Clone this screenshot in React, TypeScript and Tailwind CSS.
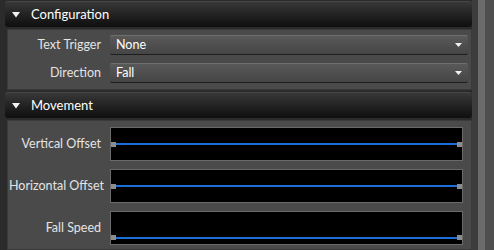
import React from 'react';

const font = { fontFamily: 'Lato, "Noto Sans", sans-serif' };

function SectionHeader({ title }: { title: string }) {
  return (
    <div className="flex h-[26px] items-center rounded-[3px] border-t border-[#454545] bg-gradient-to-b from-[#383838] to-[#0f0f0f] pl-[7px]">
      <svg width="8" height="6" viewBox="0 0 8 6" className="mr-[11px]">
        <path d="M0 0 H8 L4 5.5 Z" fill="#f2f2f2" />
      </svg>
      <span className="text-[13px] text-white">{title}</span>
    </div>
  );
}

function Dropdown({ value }: { value: string }) {
  return (
    <div className="flex h-[20px] flex-1 items-center justify-between rounded-[2px] border-t border-b border-t-[#6e6e6e] border-b-[#1e1e1e] bg-gradient-to-b from-[#595959] to-[#454545] pl-[6px] pr-[6px]">
      <span className="text-[12.5px] text-white">{value}</span>
      <svg width="7" height="5" viewBox="0 0 7 5">
        <path d="M0 0 H7 L3.5 4 Z" fill="#f0f0f0" />
      </svg>
    </div>
  );
}

function Row({ label, children }: { label: string; children: React.ReactNode }) {
  return (
    <div className="flex items-center">
      <div className="w-[93px] shrink-0 whitespace-nowrap pr-[1px] text-right text-[12.5px] text-[#e4e4e4]">{label}</div>
      <div className="ml-[8px] flex flex-1">{children}</div>
    </div>
  );
}

function Curve({ y }: { y: 'mid' | 'bottom' }) {
  const line = y === 'mid' ? 'items-center' : 'items-end pb-[4px]';
  return (
    <div className={`flex h-[34px] flex-1 border border-[#6a6a6a] bg-black ${line}`}>
      <div className="flex w-full items-center">
        <div className="h-[5px] w-[5px] shrink-0 bg-[#8c8c8c]" />
        <div className="h-[2px] flex-1 bg-[#1c6fd8]" />
        <div className="h-[5px] w-[5px] shrink-0 bg-[#8c8c8c]" />
      </div>
    </div>
  );
}

export default function App() {
  return (
    <div className="flex h-[250px] w-[494px] overflow-hidden bg-[#2b2b2b]" style={font}>
      <div className="flex w-[472px] flex-col gap-[2px] pl-[5px] pt-[1px]">
        <SectionHeader title="Configuration" />
        <div className="ml-[2px] flex flex-col gap-[8px] border border-[#3a3a3a] bg-[#4a4a4a] pb-[6px] pl-[1px] pr-[3px] pt-[5px]">
          <Row label="Text Trigger">
            <Dropdown value="None" />
          </Row>
          <Row label="Direction">
            <Dropdown value="Fall" />
          </Row>
        </div>
        <SectionHeader title="Movement" />
        <div className="ml-[2px] flex flex-1 flex-col gap-[8px] border border-[#3a3a3a] bg-[#4a4a4a] pb-[4px] pl-[1px] pr-[8px] pt-[6px]">
          <Row label="Vertical Offset">
            <Curve y="mid" />
          </Row>
          <Row label="Horizontal Offset">
            <Curve y="mid" />
          </Row>
          <Row label="Fall Speed">
            <Curve y="bottom" />
          </Row>
        </div>
      </div>
      <div className="w-[6px] bg-[#3c3c3c]" />
      <div className="w-[7px] bg-[#6b6b6b]" />
      <div className="flex-1 bg-[#4e4e4e]" />
    </div>
  );
}
